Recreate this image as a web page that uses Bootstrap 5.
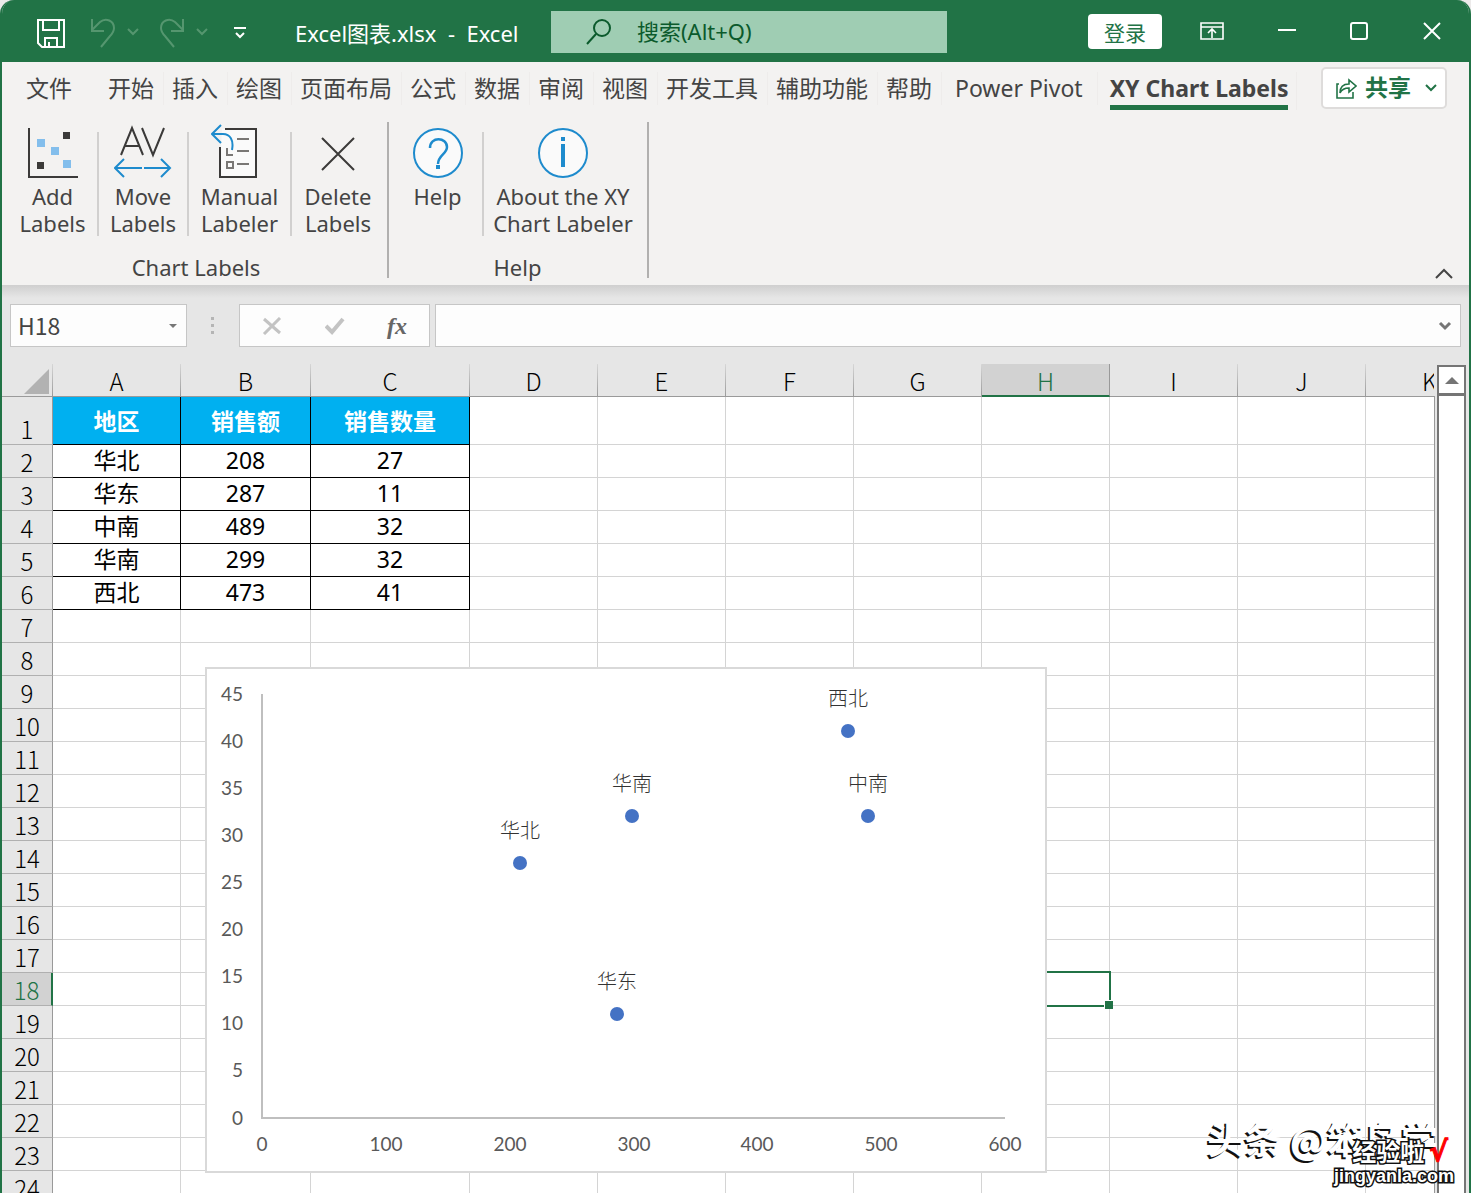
<!DOCTYPE html>
<html lang="zh-CN">
<head>
<meta charset="utf-8">
<meta name="viewport" content="width=device-width, initial-scale=1">
<title>Excel图表.xlsx - Excel</title>
<link href="https://cdn.jsdelivr.net/npm/bootstrap@5.3.0/dist/css/bootstrap.min.css" rel="stylesheet">
<script src="https://cdn.jsdelivr.net/npm/bootstrap@5.3.0/dist/js/bootstrap.bundle.min.js"></script>
<style>
:root { --xl: #217346; --ui: "Noto Sans", "Noto Sans CJK SC", sans-serif; --sheet: "Noto Sans CJK SC", sans-serif; }
body { font-family: var(--ui); background: #eceaea; color: #444; }
button, input { font-family: inherit; }
button { background: none; border: 0; padding: 0; color: inherit; }
svg { display: block; fill: none; flex-shrink: 0; }
.app-window { background: #e6e6e6; border: solid var(--xl); border-width: 0 2px; border-radius: 14px 14px 0 0; }
.title-bar { background: var(--xl); height: 62px; color: #fff; font-size: 21px; padding-left: 34px; }
.quick-access { padding-top: 4px; }
.quick-access .pick { margin-left: 10px; }
.quick-access .undo { margin-left: 23px; }
.quick-access .redo { margin-left: 19px; }
.quick-access .custom { margin-left: 25px; }
.faded { color: #55966f; }
.doc-title { width: 304px; padding: 4px 0 0 48px; font-size: 22px; white-space: pre; }
.search-box { width: 396px; height: 42px; background: #9fcdb3; color: #0b5a2c; margin-top: 2px; padding-left: 34px; gap: 25px; }
.search-box input { background: none; border: 0; outline: 0; font-size: 22px; padding: 0 0 2px; color: inherit; min-width: 0; }
.search-box input::placeholder { color: #0b5a2c; opacity: 1; }
.sign-in { background: #fff; color: var(--xl); border-radius: 4px; width: 74px; height: 35px; font-size: 21px; line-height: 39px; }
.win-btns { gap: 54px; padding: 0 27px 0 38px; }
.ribbon { background: #f3f2f1; height: 223px; }
.tab-row { height: 54px; font-size: 23px; padding: 0 22px 0 15px; }
.tab-row .nav-link { color: #444; padding: 0 9px 0 8px; line-height: 33px; margin-top: 10px; border-right: 1px solid #eeeceb; }
.tab-row .tab-file { border-right: 0; padding: 0 28px 0 9px; }
.tab-row .tab-latin { padding: 0 14px 0 13px; }
.tab-row .tab-current { font-weight: 700; padding: 0 8px 0 12px; }
.tab-current span { display: block; height: 38px; border-bottom: 5px solid var(--xl); }
.share-btn { background: #fff; border: 2px solid #dedcdb; border-radius: 5px; width: 126px; height: 42px; color: var(--xl); font-weight: 700; font-size: 23px; line-height: 34px; margin-top: 5px; padding: 0 8px 0 12px; }
.share-btn span { margin: -3px 6px 0 0; }
.ribbon-group { border-right: 2px solid #b1b0af; height: 156px; margin-top: 6px; padding: 0 3px 0 6px; font-size: 22px; }
.ribbon-group + .ribbon-group { padding: 0 5px 0 4px; }
.tool-btn { padding: 0; min-width: 90px; height: 104px; margin-top: 10px; line-height: 27px; }
.tool-btn:first-child { min-width: 89px; }
.tool-btn + .tool-btn { border-left: 2px solid #d1d0cf; }
.tool-btn svg { margin: -8px auto 1px; height: 58px; }
.tool-btn.w-manual { min-width: 103px; }
.tool-btn.w-delete { min-width: 94px; }
.tool-btn.w-about { min-width: 160px; }
.group-name { line-height: 28px; margin-top: 17px; }
.formula-zone { height: 79px; padding: 19px 8px 0; background: linear-gradient(#cfcfcf, #e6e6e6 13px); }
.field-box { background: #fdfdfd; border: 1px solid #c6c6c6; height: 43px; }
.field-box input { border: 0; outline: 0; background: none; color: #444; font: 23px/30px var(--sheet); padding: 0 0 2px 7px; min-width: 0; }
.name-box { width: 177px; }
.grip { width: 52px; height: 43px; }
.fx-box { width: 191px; padding: 0 22px; margin-right: 5px; }
.fx-glyph { font: italic 700 24px/1 "Liberation Serif", serif; color: #666; }
.sheet-wrap { min-height: 0; }
.sheet { overflow: hidden; min-width: 0; }
.grid-table { table-layout: fixed; width: 1492px; border-collapse: separate; border-spacing: 0; color: #000; background: #fff; }
.grid-table th, .grid-table td { padding: 0; text-align: center; border: solid #d4d4d4; border-width: 0 1px 1px 0; height: 33px; }
.grid-table thead th { background: #e6e6e6; font: 300 24px/31px var(--sheet); vertical-align: bottom; border-image: linear-gradient(#d8d8d8, #999) 1; }
.grid-table tbody th { background: #e6e6e6; font: 300 24px/30px var(--sheet); vertical-align: bottom; border-color: #b0b0b0 #999; }
.grid-table .tall td, .grid-table .tall th { height: 48px; }
.grid-table td.filled { border-color: #000; font: 23px/30px var(--ui); padding-bottom: 2px; }
.grid-table .tall td.filled { background: #00b0f0; color: #fff; font-weight: 700; padding: 0; }
.grid-table thead th.picked { background: #d2d2d2; color: var(--xl); border-image: none; border-color: #999; border-bottom: 2px solid var(--xl); line-height: 29px; }
.grid-table tbody th.picked { background: #d2d2d2; color: var(--xl); border-right: 2px solid var(--xl); }
.active-cell { position: relative; }
.active-cell i { position: absolute; inset: -2px; border: 2px solid var(--xl); }
.active-cell i::after { content: ""; position: absolute; right: -4px; bottom: -4px; width: 9px; height: 9px; background: var(--xl); border: solid #fff; border-width: 1px 0 0 1px; }
.corner-mark { width: 25px; height: 25px; margin: 0 3px 2px auto; background: #b2b2b2; clip-path: polygon(100% 0, 100% 100%, 0 100%); }
.chart-card { position: absolute; left: 203px; top: 303px; width: 842px; height: 506px; background: #fff; border: 2px solid #d9d9d9; }
.chart-card text { font: 19px Lato, "Noto Sans CJK SC", sans-serif; fill: #595959; text-anchor: middle; }
.chart-card .pt-label { font: 300 20px "Noto Sans CJK SC", sans-serif; fill: #333; }
.chart-card .y-tick { text-anchor: end; }
.sheet-edge { width: 1px; background: #999; margin: 32px 2px 0 0; }
.scroll-col { width: 29px; margin: 1px 3px 0 0; }
.scroll-up { height: 30px; border: 2px solid #757575; background: #fff; }
.scroll-track { border: solid #757575; border-width: 3px 2px 0; background: #fff; margin-top: -2px; }
.mark-a { position: absolute; right: 31px; bottom: 29px; font: 700 37px/52px "Noto Sans CJK SC", sans-serif; color: #fff; text-shadow: -2px 2px 0 #111; white-space: pre; }
.mark-b { position: absolute; right: 15px; bottom: 6px; font: 700 18px/21px "Liberation Sans", "Noto Sans CJK SC", sans-serif; color: #fff; -webkit-text-stroke: 3px #111; paint-order: stroke fill; text-align: right; }
.mark-b b { color: #f00; -webkit-text-stroke: 1px #f00; font: 700 28px/21px "DejaVu Sans", sans-serif; padding-left: 5px; }
.mark-b .cn { font-size: 24px; padding-right: 6px; }
</style>
</head>
<body>
<div class="app-window vh-100 d-flex flex-column overflow-hidden position-relative">

  <header class="title-bar d-flex align-items-center flex-shrink-0">
    <div class="quick-access d-flex align-items-center flex-shrink-0">
      <button aria-label="保存"><svg width="30" height="32" viewBox="0 0 30 32" stroke="#fff" stroke-width="2"><path d="M2 3h26v27H6l-4-4zM7 3v10h16V3M9 30v-9h12v9M13 25v5"/></svg></button>
      <button class="faded undo" aria-label="撤消"><svg width="28" height="32" viewBox="0 0 28 32" stroke="currentColor" stroke-width="2"><path d="M3 2v12h12M3 13l8-8c6-5 14-1 14 6 0 4-2 6-4 8L12 30"/></svg></button>
      <button class="faded pick" aria-label="撤消列表"><svg width="12" height="10" viewBox="0 0 12 10" stroke="currentColor" stroke-width="2"><path d="M1 1l5 5 5-5"/></svg></button>
      <button class="faded redo" aria-label="恢复"><svg width="28" height="32" viewBox="0 0 28 32" stroke="currentColor" stroke-width="2"><path d="M25 2v12H13M25 13l-8-8C11 0 3 4 3 11c0 4 2 6 4 8l9 11"/></svg></button>
      <button class="faded pick" aria-label="恢复列表"><svg width="12" height="10" viewBox="0 0 12 10" stroke="currentColor" stroke-width="2"><path d="M1 1l5 5 5-5"/></svg></button>
      <button class="custom" aria-label="自定义快速访问工具栏"><svg width="14" height="14" viewBox="0 0 14 14" stroke="#fff" stroke-width="2"><path d="M1 2h12M3 7l4 4 4-4"/></svg></button>
    </div>
    <div class="doc-title flex-shrink-0">Excel图表.xlsx  -  Excel</div>
    <label class="search-box d-flex align-items-center">
      <svg width="27" height="28" viewBox="0 0 27 28" stroke="currentColor" stroke-width="2"><circle cx="17" cy="10" r="8"/><path d="M11 16L2 26"/></svg>
      <input class="flex-grow-1" type="text" placeholder="搜索(Alt+Q)" aria-label="搜索">
    </label>
    <button class="sign-in ms-auto">登录</button>
    <div class="win-btns d-flex align-items-center">
      <button aria-label="功能区显示选项"><svg width="24" height="18" viewBox="0 0 24 18" stroke="#fff" stroke-width="2"><path d="M1 1h22v16H1zM1 5h22M12 16V8M8 11l4-4 4 4" stroke-width="1.6"/></svg></button>
      <button aria-label="最小化"><svg width="18" height="18" viewBox="0 0 18 18" stroke="#fff" stroke-width="2"><path d="M0 8h18"/></svg></button>
      <button aria-label="最大化"><svg width="18" height="18" viewBox="0 0 18 18" stroke="#fff" stroke-width="2"><rect x="1" y="1" width="16" height="16" rx="2"/></svg></button>
      <button aria-label="关闭"><svg width="20" height="18" viewBox="-1 0 20 18" stroke="#fff" stroke-width="2"><path d="M1 1l16 16M17 1L1 17"/></svg></button>
    </div>
  </header>

  <section class="ribbon flex-shrink-0 position-relative">
    <div class="tab-row d-flex justify-content-between">
      <nav class="nav flex-nowrap text-nowrap align-items-start">
        <a class="nav-link tab-file" href="#">文件</a>
        <a class="nav-link" href="#">开始</a>
        <a class="nav-link" href="#">插入</a>
        <a class="nav-link" href="#">绘图</a>
        <a class="nav-link" href="#">页面布局</a>
        <a class="nav-link" href="#">公式</a>
        <a class="nav-link" href="#">数据</a>
        <a class="nav-link" href="#">审阅</a>
        <a class="nav-link" href="#">视图</a>
        <a class="nav-link" href="#">开发工具</a>
        <a class="nav-link" href="#">辅助功能</a>
        <a class="nav-link" href="#">帮助</a>
        <a class="nav-link tab-latin" href="#">Power Pivot</a>
        <a class="nav-link tab-latin tab-current" href="#"><span>XY Chart Labels</span></a>
      </nav>
      <button class="share-btn d-flex align-items-center justify-content-between">
        <svg width="22" height="22" viewBox="0 0 22 22" stroke="currentColor" stroke-width="1.6"><path d="M4 7H2v14h16v-6M5 16c0-6 3-9 9-9V3l7 6-7 6v-4c-4 0-7 1-9 5z"/></svg>
        <span>共享</span>
        <svg width="12" height="10" viewBox="0 0 12 10" stroke="currentColor" stroke-width="2"><path d="M1 2l5 5 5-5"/></svg>
      </button>
    </div>
    <div class="d-flex">
      <div class="ribbon-group text-center">
        <div class="d-flex">
          <button class="tool-btn"><svg width="58" viewBox="0 0 58 58"><path d="M5 4v49h49" stroke="#3b3a39" stroke-width="2"/><path d="M39 8h7v7h-7zM13 38h7v7h-7z" fill="#3b3a39"/><path d="M13 15h8v8h-8zM27 23h8v8h-8zM39 36h8v8h-8z" fill="#83beec"/></svg>Add<br>Labels</button>
          <button class="tool-btn"><svg width="58" viewBox="1 0 58 58" stroke-width="2"><path d="M8 31L19 4l11 27M11 22h16M29 4l11 27L51 4" stroke="#3b3a39"/><path d="M29 44H2M11 35l-9 9 9 9M31 44h26M48 35l9 9-9 9" stroke="#1e8bcd"/></svg>Move<br>Labels</button>
          <button class="tool-btn w-manual"><svg width="58" viewBox="5 0 58 58" stroke-width="2"><path d="M15 24v29h35V5H16z" fill="#fafafa"/><path d="M19 5h31v48H14V23" stroke="#3b3a39"/><path d="M31 15h12M31 27h12M31 40h12M21 24v7h6M21 38h6v6h-6z" stroke="#797775"/><path d="M7 10h10c7 0 11 6 9 16M15 1l-9 9 9 9" stroke="#1e8bcd"/></svg>Manual<br>Labeler</button>
          <button class="tool-btn w-delete"><svg width="58" viewBox="0 0 58 58"><path d="M13 14l32 32M45 14L13 46" stroke="#3b3a39" stroke-width="2"/></svg>Delete<br>Labels</button>
        </div>
        <div class="group-name">Chart Labels</div>
      </div>
      <div class="ribbon-group text-center">
        <div class="d-flex">
          <button class="tool-btn"><svg width="58" viewBox="0 0 58 58" stroke="#1e8bcd"><circle cx="29" cy="29" r="24" stroke-width="2" fill="#fafafa"/><path d="M21 24c0-12 17-11 17-1 0 7-9 8-9 17" stroke-width="2.5"/><path d="M29 41v4" stroke-width="4"/></svg>Help<br>&nbsp;</button>
          <button class="tool-btn w-about"><svg width="58" viewBox="0 0 58 58" stroke="#1e8bcd"><circle cx="29" cy="29" r="24" stroke-width="2" fill="#fafafa"/><path d="M29 13v4M29 20v23" stroke-width="4"/></svg>About the XY<br>Chart Labeler</button>
        </div>
        <div class="group-name">Help</div>
      </div>
    </div>
    <button class="position-absolute bottom-0 end-0 pe-3 pb-1" aria-label="折叠功能区"><svg width="18" height="14" viewBox="0 0 18 14" stroke="#444" stroke-width="2"><path d="M1 11l8-8 8 8"/></svg></button>
  </section>

  <section class="formula-zone d-flex flex-shrink-0 align-items-start">
    <div class="field-box name-box d-flex align-items-center">
      <input class="flex-grow-1" type="text" value="H18" aria-label="名称框">
      <button class="px-2" aria-label="名称列表"><svg width="10" height="6" viewBox="0 0 10 6"><path d="M1 1h8L5 5z" fill="#777"/></svg></button>
    </div>
    <div class="grip d-flex align-items-center justify-content-center"><svg width="4" height="18" viewBox="0 0 4 18"><path d="M0 0h3v3H0zM0 7h3v3H0zM0 14h3v3H0z" fill="#b5b5b5"/></svg></div>
    <div class="field-box fx-box d-flex align-items-center justify-content-between">
      <button aria-label="取消"><svg width="20" height="18" viewBox="0 0 20 18" stroke="#c3c3c3" stroke-width="3"><path d="M2 2l16 14M18 1L2 17"/></svg></button>
      <button aria-label="输入"><svg width="20" height="18" viewBox="0 0 20 18" stroke="#c3c3c3" stroke-width="4"><path d="M1 9l6 6L18 2"/></svg></button>
      <button class="fx-glyph" aria-label="插入函数">fx</button>
    </div>
    <div class="field-box flex-grow-1 d-flex align-items-center">
      <input class="flex-grow-1" type="text" aria-label="编辑栏">
      <button class="px-2" aria-label="展开编辑栏"><svg width="14" height="10" viewBox="0 0 14 10" stroke="#757575" stroke-width="3"><path d="M2 2l5 5 5-5"/></svg></button>
    </div>
  </section>

  <main class="sheet-wrap d-flex flex-grow-1">
    <div class="sheet flex-grow-1 position-relative">
      <table class="grid-table">
        <colgroup><col style="width:51px"><col style="width:128px"><col style="width:130px"><col style="width:159px"><col span="8" style="width:128px"></colgroup>
        <thead><tr id="letters"><th aria-label="全选"><div class="corner-mark"></div></th></tr></thead>
        <tbody id="cells"></tbody>
      </table>
      <div class="chart-card"><svg width="838" height="502" viewBox="207 669 838 502" id="scatter" role="img" aria-label="散点图"></svg></div>
    </div>
    <div class="sheet-edge flex-shrink-0"></div>
    <div class="scroll-col d-flex flex-column flex-shrink-0">
      <button class="scroll-up d-flex align-items-center justify-content-center flex-shrink-0" aria-label="向上滚动"><svg width="14" height="8" viewBox="0 0 14 8"><path d="M0 8l7-7 7 7z" fill="#757575"/></svg></button>
      <div class="scroll-track flex-grow-1"></div>
    </div>
  </main>

  <div class="mark-a">头条 @笨鸟学</div>
  <div class="mark-b"><span class="cn">经验啦<b>√</b></span><br>jingyanla.com</div>
</div>

<script>
const records = [["地区", "销售额", "销售数量"], ["华北", 208, 27], ["华东", 287, 11], ["中南", 489, 32], ["华南", 299, 32], ["西北", 473, 41]];
const letters = "ABCDEFGHIJK".split("");
document.getElementById("letters").insertAdjacentHTML("beforeend",
  letters.map(l => `<th scope="col"${l === "H" ? ' class="picked"' : ""}>${l}</th>`).join(""));

let rows = "";
for (let r = 1; r <= 24; r++) {
  rows += `<tr${r === 1 ? ' class="tall"' : ""}><th scope="row"${r === 18 ? ' class="picked"' : ""}>${r}</th>`;
  letters.forEach((l, c) => {
    if (records[r - 1] && c < 3) rows += `<td class="filled">${records[r - 1][c]}</td>`;
    else if (r === 18 && l === "H") rows += '<td class="active-cell"><i></i></td>';
    else rows += "<td></td>";
  });
  rows += "</tr>";
}
document.getElementById("cells").innerHTML = rows;

const px = v => Math.round(262 + v * 743 / 600), py = v => Math.round(1117.6 - v * 424 / 45);
let plot = '<path d="M262 694V1118H1005" stroke="#bfbfbf" stroke-width="2"/>';
for (let v = 0; v <= 45; v += 5) plot += `<text class="y-tick" x="243" y="${py(v) + 7}">${v}</text>`;
for (let v = 0; v <= 600; v += 100) plot += `<text x="${px(v)}" y="1151">${v}</text>`;
records.slice(1).forEach(([name, x, y]) => {
  plot += `<circle cx="${px(x)}" cy="${py(y)}" r="7" fill="#4472c4"/><text class="pt-label" x="${px(x)}" y="${py(y) - 25}">${name}</text>`;
});
document.getElementById("scatter").innerHTML = plot;
</script>
</body>
</html>
